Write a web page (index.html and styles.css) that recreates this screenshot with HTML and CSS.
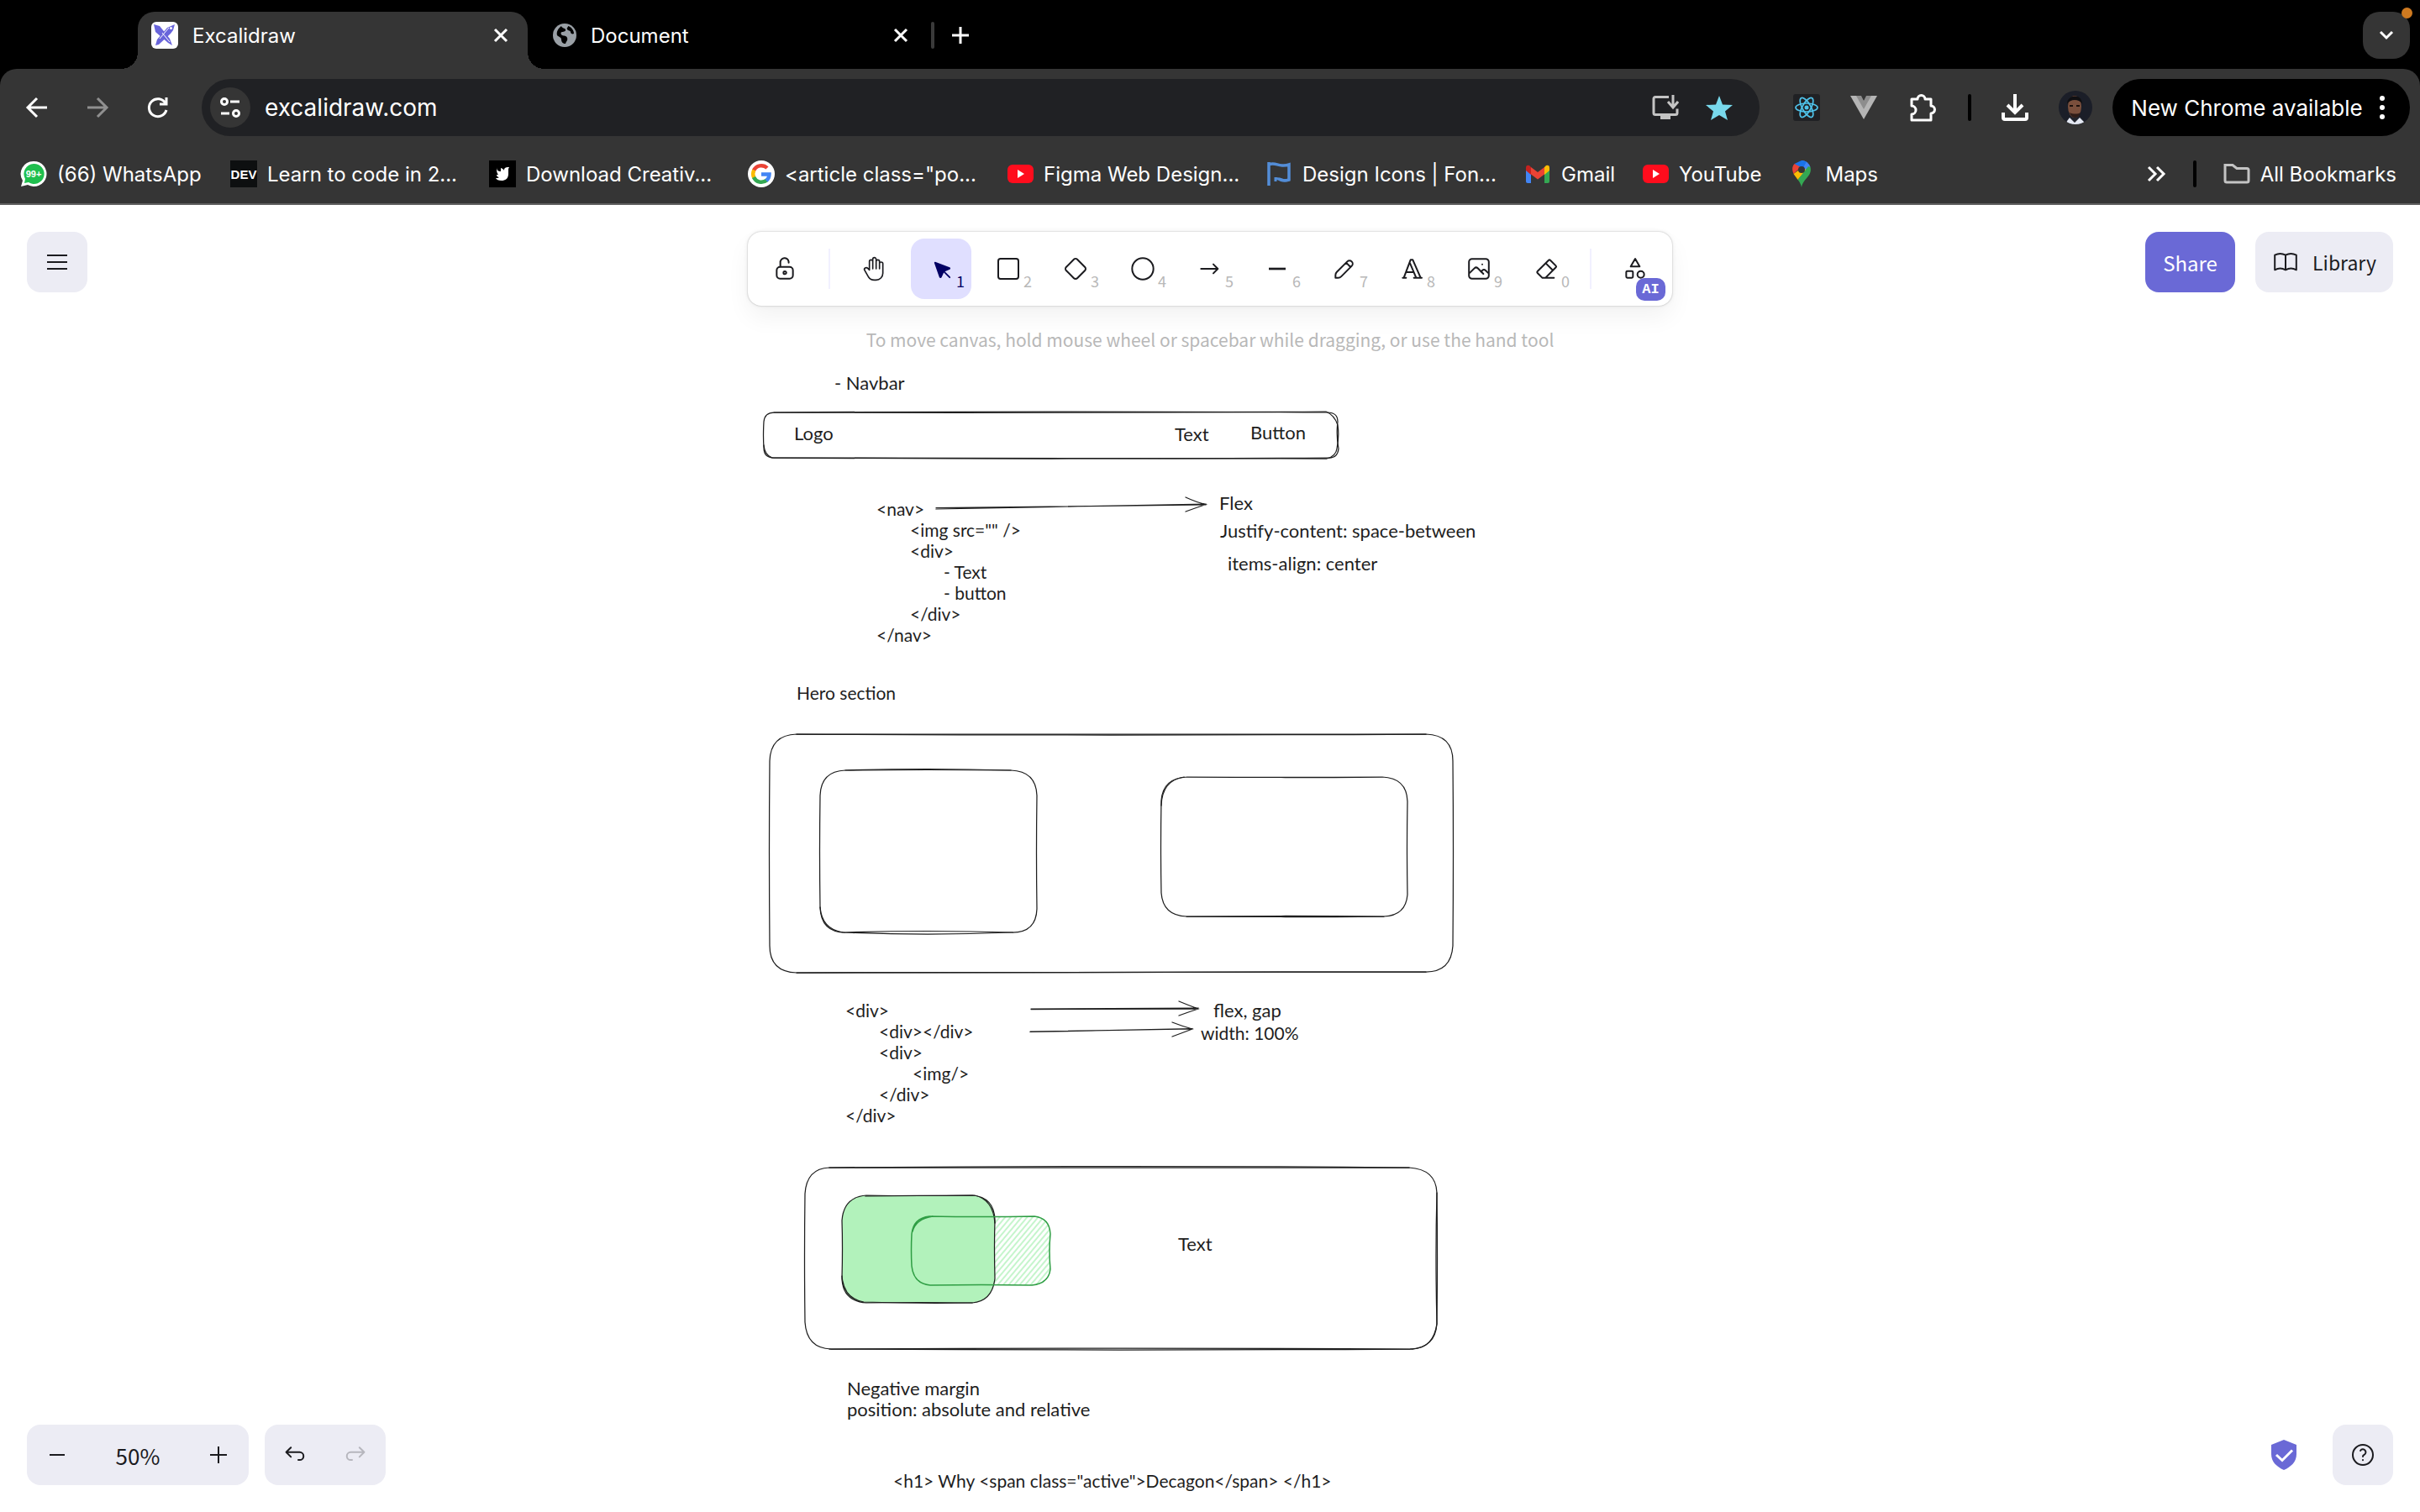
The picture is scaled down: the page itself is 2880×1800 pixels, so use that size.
FILE: index.html
```
<!DOCTYPE html>
<html lang="en">
<head>
<meta charset="utf-8">
<title>Excalidraw</title>
<link rel="stylesheet" href="styles.css">
</head>
<body>
<header class="browser">
  <div class="tabstrip">
    <div class="tab tab-active">
      <svg class="ico32" viewBox="0 0 32 32"><rect width="32" height="32" rx="6" fill="#fff"/><g fill="#6965db"><path d="M3 3l7 2 12 15 3 8-5-3L5 12z"/><path d="M28 3l-9 4L7 21l-2 7 4-1 14-13 3-4z"/></g><path d="M21 7l-11 13M13 13l9 11" stroke="#fff" stroke-width="1" fill="none"/><circle cx="23.500" cy="7.500" r="1.500" fill="#fff"/></svg>
      <span class="tab-title">Excalidraw</span>
      <button class="plain" aria-label="Close tab"><svg class="ico20" viewBox="0 0 20 20"><path d="M3 3l14 14M17 3L3 17" class="w3"/></svg></button>
    </div>
    <div class="tab">
      <svg class="ico28" viewBox="0 0 28 28"><circle cx="14" cy="14" r="14" fill="#9aa0a6"/><path d="M10 3c1 3 4 2 5 4s-2 3-4 3-2 3 0 4 5 0 6 3-1 4-2 7c-3 0-5-2-5-5s-3-3-5-5c-1-4 1-8 5-11zM18 3c4 1 7 5 7 9-2 1-4 0-4-2s-3-1-4-3 1-2 1-4z" fill="#000"/></svg>
      <span class="tab-title">Document</span>
      <button class="plain" aria-label="Close tab"><svg class="ico20" viewBox="0 0 20 20"><path d="M3 3l14 14M17 3L3 17" class="w3"/></svg></button>
    </div>
    <span class="tab-sep"></span>
    <button class="plain" aria-label="New tab"><svg class="ico20" viewBox="0 0 20 20"><path d="M10 0v20M0 10h20" class="w3"/></svg></button>
    <button class="tab-search" aria-label="Search tabs"><svg class="ico20" viewBox="0 0 20 20"><path d="M3 6l7 7 7-7" class="w3"/></svg><span class="dot"></span></button>
  </div>
  <div class="navrow">
    <div class="navbtns">
      <button class="plain" aria-label="Back"><svg class="ico28" viewBox="0 0 28 28"><path d="M26 14H3M14 3L3 14l11 11" class="w3"/></svg></button>
      <button class="plain dim" aria-label="Forward"><svg class="ico28" viewBox="0 0 28 28"><path d="M2 14h23M14 3l11 11-11 11" class="w3"/></svg></button>
      <button class="plain" aria-label="Reload"><svg class="ico28" viewBox="0 0 28 28"><path d="M24 17a10.500 10.500 0 1 1-1-8M24 2v8h-8" class="w3"/></svg></button>
    </div>
    <div class="omnibox">
      <button class="chip" aria-label="Site information"><svg class="ico28" viewBox="0 0 28 28"><circle cx="7" cy="7" r="3.500" class="w3"/><path d="M14 7h11M3 21h10" class="w3"/><circle cx="21" cy="21" r="3.500" class="w3"/></svg></button>
      <input class="url" type="text" value="excalidraw.com" aria-label="Address">
      <button class="plain" aria-label="Install app"><svg class="ico32" viewBox="0 0 32 32"><path d="M20 3.500H4a2 2 0 0 0-2 2v17a2 2 0 0 0 2 2h24a2 2 0 0 0 2-2v-5" fill="none" stroke="#c4c4c4" stroke-width="3"/><path d="M10 25h12v5H10z" fill="#c4c4c4"/><path d="M25 1v14M19 9l6 7 6-7" fill="none" stroke="#c4c4c4" stroke-width="3"/></svg></button>
      <button class="plain" aria-label="Bookmarked"><svg class="ico32" viewBox="0 0 32 32"><path d="M16 2l4 10.500L32 13l-9 7.500L26 31l-10-6-10 6 3-10.500L0 13l12-.5z" fill="#78d9ec"/></svg></button>
    </div>
    <div class="exts">
      <svg class="ico32" viewBox="0 0 32 32"><rect width="32" height="32" rx="3" fill="#202124"/><g fill="none" stroke="#4fc3ea" stroke-width="1.700"><ellipse cx="16" cy="16" rx="13" ry="5"/><ellipse cx="16" cy="16" rx="13" ry="5" transform="rotate(60 16 16)"/><ellipse cx="16" cy="16" rx="13" ry="5" transform="rotate(120 16 16)"/></g><circle cx="16" cy="16" r="2.500" fill="#4fc3ea"/></svg>
      <svg class="ico32" viewBox="0 0 32 32"><path d="M0 2h12l4 7 4-7h12L16 30z" fill="#b5b5b5"/><path d="M7 2h6l3 6 3-6h6l-9 16z" fill="#8d8d8d"/></svg>
      <button class="plain" aria-label="Extensions"><svg class="ico36" viewBox="0 0 36 36"><path d="M5 8h7a4.500 4.500 0 0 1 9 0h7v8a4.500 4.500 0 0 1 0 9v8H5v-7a5 5 0 0 0 0-10z" class="w3" stroke-linejoin="round"/></svg></button>
      <span class="vsep"></span>
      <button class="plain" aria-label="Downloads"><svg class="ico32" viewBox="0 0 32 32"><path d="M16 0v21M7 13l9 9 9-9M2 22v6a2 2 0 0 0 2 2h24a2 2 0 0 0 2-2v-6" class="w4"/></svg></button>
      <svg class="ico40" viewBox="0 0 40 40"><defs><clipPath id="av"><circle cx="20" cy="20" r="20"/></clipPath></defs><g clip-path="url(#av)"><rect width="40" height="40" fill="#1b1e28"/><path d="M3 40l8-6 6-4h7l6 5 3 5z" fill="#22242c"/><path d="M10 36l3-4 6 6 6-6 5 5 1 5H8z" fill="#e4e8f2"/><ellipse cx="19" cy="19" rx="8" ry="13" fill="#7a4f3c"/><path d="M10 16c0-12 18-13 18 0-3-6-14-7-18 0z" fill="#100f12"/><path d="M13 26c2 8 11 8 13 0-3 2-9 2-13 0z" fill="#2f1d18"/><path d="M13 18h4M21 18h4" stroke="#1c100c" stroke-width="2"/></g></svg>
    </div>
    <button class="update">New Chrome available<svg class="dots" viewBox="0 0 6 28"><g fill="#fff"><circle cx="3" cy="3" r="3"/><circle cx="3" cy="14" r="3"/><circle cx="3" cy="25" r="3"/></g></svg></button>
  </div>
  <nav class="bookmarks">
    <a href="#"><svg class="ico32" viewBox="0 0 32 32"><path d="M16 1a15 15 0 1 1-7 28L1 31l2-7A15 15 0 0 1 16 1z" fill="#fff"/><path d="M16 4a12 12 0 1 1-6 22l-5 1 1-5A12 12 0 0 1 16 4z" fill="#1fbf4e"/><text x="16" y="20" class="t99">99+</text></svg><span class="chat">(66) WhatsApp</span></a>
    <a href="#"><svg class="ico32" viewBox="0 0 32 32"><rect width="32" height="32" fill="#0d0f10"/><text x="16" y="22" class="tdev">DEV</text></svg><span class="cut">Learn to code in 2...</span></a>
    <a href="#"><svg class="ico32" viewBox="0 0 32 32"><rect width="32" height="32" fill="#000"/><path d="M9 8c0 4 2 5 5 5V9c2 1 3 1 4 3 0-3 1-4 6-4l-1 2v6c0 6-4 8-8 8s-6-1-7-3c2 0 3 0 4-1-2 0-3-2-3-3h2c-2-2-2-5-2-9z" fill="#fff"/></svg><span class="cut">Download Creativ...</span></a>
    <a href="#"><svg class="ico32" viewBox="0 0 32 32"><circle cx="16" cy="16" r="16" fill="#fff"/><g fill="none" stroke-width="4.500"><path d="M23 9a10 10 0 0 0-16 3" stroke="#ea4335"/><path d="M7.300 11.500a10 10 0 0 0 0 9" stroke="#fbbc05"/><path d="M7 20a10 10 0 0 0 15.500 3.500" stroke="#34a853"/><path d="M22 24a10 10 0 0 0 3.500-7.500H16" stroke="#4285f4"/></g></svg><span class="cut">&lt;article class="po...</span></a>
    <a href="#"><svg class="ico32" viewBox="0 0 32 32"><rect x="1" y="5" width="31" height="22" rx="6" fill="#ff0d1d"/><path d="M13 11l8 5-8 5z" fill="#fff"/></svg><span class="cut">Figma Web Design...</span></a>
    <a href="#"><svg class="ico32" viewBox="0 0 32 32"><path d="M4 2v28M4 5c8-4 12 4 24 0v18c-6 2-9 1-12-1" fill="none" stroke="#538dd7" stroke-width="3.500"/><path d="M12 20v5M12 22c6-2 8 4 16 1" fill="none" stroke="#538dd7" stroke-width="3"/></svg><span class="cut">Design Icons | Fon...</span></a>
    <a href="#"><svg class="ico32" viewBox="0 0 32 32"><path d="M2 9v16q0 2 2 2h4V13z" fill="#4285f4"/><path d="M30 9v16q0 2-2 2h-4V13z" fill="#34a853"/><path d="M24 8l2-2q4-1 4 3v3l-6 5z" fill="#fbbc04"/><path d="M8 8L6 6q-4-1-4 3v3l6 5z" fill="#c5221f"/><path d="M8 8l8 6 8-6v8.500l-8 6-8-6z" fill="#ea4335"/></svg><span>Gmail</span></a>
    <a href="#"><svg class="ico32" viewBox="0 0 32 32"><rect x="1" y="5" width="31" height="22" rx="6" fill="#ff0d1d"/><path d="M13 11l8 5-8 5z" fill="#fff"/></svg><span>YouTube</span></a>
    <a href="#"><svg class="ico32" viewBox="0 0 32 32"><path d="M16 0a11 11 0 0 1 10.500 8L16 14z" fill="#4285f4"/><path d="M16 0L7.500 4 16 12 22 1.500z" fill="#1a73e8"/><path d="M7.500 4C4 8 5 12 6.500 16L15 8z" fill="#ea4335"/><path d="M6.500 16l5 7L22 11l-6-2z" fill="#fbbc04"/><path d="M26.500 8C29 19 18 21 16 32c-1-4-2-6-4.500-9L24 7z" fill="#34a853"/><circle cx="16" cy="11" r="4" fill="#353535"/></svg><span>Maps</span></a>
    <button class="plain more" aria-label="More bookmarks"><svg class="ico24" viewBox="0 0 24 24"><path d="M3 4l8 8-8 8M13 4l8 8-8 8" class="w3"/></svg></button>
    <span class="vsep"></span>
    <a href="#"><svg class="ico32" viewBox="0 0 32 32"><path d="M2 5.500h9l5 4h12a2 2 0 0 1 2 2V24a2 2 0 0 1-2 2H4a2 2 0 0 1-2-2z" fill="none" stroke="#c4c4c4" stroke-width="3"/></svg><span class="all">All Bookmarks</span></a>
  </nav>
</header>

<main class="stage">
  <div class="drawing">
    <svg class="shapes" aria-hidden="true">
      <defs><pattern id="hatch" width="5" height="5" patternUnits="userSpaceOnUse" patternTransform="rotate(40)"><path d="M1 0v5" stroke="#b2f2bb" stroke-width="1.500"/></pattern></defs>
      <g class="ink">
        <path d="M921 247Q1250 245 1580 247Q1592 247 1592 258Q1590 275 1593 290Q1592 301 1582 301Q1250 303 921 301Q909 301 909 289Q908 275 909 258Q910 247 921 247z"/>
        <path d="M921 247Q1250 248 1578 246Q1588 250 1592 262Q1594 275 1591 290Q1590 299 1579 302Q1250 301 919 301Q910 298 909 286"/>
        <path d="M948 630Q1320 632 1697 630Q1729 631 1729 662Q1730 770 1729 882Q1727 913 1697 913Q1320 912 948 914Q916 913 916 882Q915 770 916 662Q917 631 948 630z"/>
        <path d="M948 630Q1320 629 1697 630M948 914Q1320 915 1697 913"/>
        <path d="M1006 673Q1104 672 1203 673Q1233 674 1234 703Q1233 770 1234 838Q1233 866 1205 866Q1104 863 1006 866Q977 866 976 836Q975 770 976 703Q977 674 1006 673z"/>
        <path d="M1006 673Q1104 670 1203 673M1205 866Q1104 870 1003 866Q978 862 976 836"/>
        <path d="M1413 681Q1530 682 1645 681Q1674 682 1675 710Q1674 765 1675 821Q1673 846 1647 847Q1530 848 1412 847Q1384 846 1382 819Q1381 765 1382 709Q1384 682 1413 681z"/>
        <path d="M1382 715Q1383 685 1409 681M1412 847Q1530 846 1647 847"/>
        <path d="M987 1146Q1330 1143 1677 1146Q1709 1148 1710 1176Q1711 1250 1710 1332Q1708 1361 1678 1362Q1330 1364 989 1362Q960 1361 958 1330Q957 1250 958 1177Q960 1147 987 1146z"/>
        <path d="M987 1146Q1330 1147 1677 1146M1710 1176Q1708 1250 1710 1332Q1706 1360 1682 1362Q1330 1360 987 1362"/>
        <path d="M1114 360.500L1435 357M1114 362L1435 356M1411 348Q1424 354 1435 356.500Q1422 361 1411 365"/>
        <path d="M1227 957L1426 956M1227 957.500L1426 957M1403 948Q1415 953 1426 957Q1414 961 1403 965"/>
        <path d="M1226 984L1419 981M1226 984.500L1419 980.500M1395 973Q1408 978 1419 981Q1406 986 1395 990"/>
      </g>
      <rect x="1085" y="1204" width="165" height="82" rx="20" fill="url(#hatch)"/>
      <path class="ink filled" d="M1031 1179Q1093 1180 1157 1179Q1183 1181 1184 1208Q1183 1240 1184 1278Q1181 1305 1157 1307Q1093 1306 1031 1307Q1003 1305 1002 1278Q1003 1240 1002 1209Q1004 1181 1031 1179z"/>
      <path class="ink" d="M1030 1180Q1093 1179 1160 1179Q1182 1184 1184 1212M1157 1307Q1093 1308 1028 1306Q1004 1302 1002 1275"/>
      <path class="ink green" d="M1106 1204Q1168 1205 1231 1204Q1249 1206 1250 1225Q1248 1245 1250 1267Q1248 1284 1228 1286Q1168 1285 1107 1286Q1087 1284 1085 1263Q1084 1245 1085 1225Q1087 1206 1106 1204zM1086 1222Q1090 1207 1110 1204"/>
    </svg>
    <p class="note n1">- Navbar</p>
    <p class="note n2">Logo</p>
    <p class="note n3">Text</p>
    <p class="note n4">Button</p>
    <div class="note code n5"><p>&lt;nav&gt;</p><p class="in1">&lt;img src="" /&gt;</p><p class="in1">&lt;div&gt;</p><p class="in2">- Text</p><p class="in2">- button</p><p class="in1">&lt;/div&gt;</p><p>&lt;/nav&gt;</p></div>
    <p class="note n6">Flex</p>
    <p class="note n7">Justify-content: space-between</p>
    <p class="note n8">items-align: center</p>
    <p class="note code n9">Hero section</p>
    <div class="note code n10"><p>&lt;div&gt;</p><p class="in1">&lt;div&gt;&lt;/div&gt;</p><p class="in1">&lt;div&gt;</p><p class="in2">&lt;img/&gt;</p><p class="in1">&lt;/div&gt;</p><p>&lt;/div&gt;</p></div>
    <p class="note n11">flex, gap</p>
    <p class="note code n12">width: 100%</p>
    <p class="note n13">Text</p>
    <div class="note n14"><p>Negative margin</p><p>position: absolute and relative</p></div>
    <p class="note code n15">&lt;h1&gt; Why &lt;span class="active"&gt;Decagon&lt;/span&gt; &lt;/h1&gt;</p>
  </div>

  <div class="top">
    <div class="side"><button class="tile" aria-label="Menu"><svg class="ico40" viewBox="0 0 40 40"><path d="M8 12h24M8 20h24M8 28h24" class="k"/></svg></button></div>
    <div class="center">
      <div class="tools">
        <button class="tool" aria-label="Keep selected tool active"><svg class="ico32" viewBox="0 0 20 20"><g class="k1"><path d="M13.542 8.542H6.458a2.500 2.500 0 0 0-2.500 2.500v3.750a2.500 2.500 0 0 0 2.500 2.500h7.084a2.500 2.500 0 0 0 2.500-2.500v-3.750a2.500 2.500 0 0 0-2.500-2.500z"/><path d="M10 13.958a1.042 1.042 0 1 0 0-2.083 1.042 1.042 0 0 0 0 2.083z"/><path d="M6.667 8.333V5.417a3.100 3.100 0 0 1 6.200-.6v.6"/></g></svg></button>
        <span class="tsep"></span>
        <button class="tool" aria-label="Hand"><svg class="ico32" viewBox="0 0 24 24"><g class="k1"><path d="M8 13v-7.500a1.500 1.500 0 0 1 3 0v6.500M11 5.500v-2a1.500 1.500 0 1 1 3 0v8.500M14 5.500a1.500 1.500 0 0 1 3 0v6.500M17 7.500a1.500 1.500 0 0 1 3 0v8.500a6 6 0 0 1-6 6h-2h.208a6 6 0 0 1-5.012-2.700l-.196-.300c-.312-.479-1.407-2.388-3.286-5.728a1.500 1.500 0 0 1 .536-2.022a1.867 1.867 0 0 1 2.280.280l1.470 1.470"/></g></svg></button>
        <button class="tool on" aria-label="Selection"><svg class="ico32" viewBox="0 0 22 22"><path d="M6 6l4.153 11.793a.365.365 0 0 0 .331.207.366.366 0 0 0 .332-.207L13 13l4.787-1.994a.355.355 0 0 0 .213-.323.355.355 0 0 0-.213-.323L6 6zM13.500 13.500L18 18" fill="#030064" stroke="#030064" stroke-width="1.250" stroke-linejoin="round" stroke-linecap="round"/></svg><kbd>1</kbd></button>
        <button class="tool" aria-label="Rectangle"><svg class="ico32" viewBox="0 0 24 24"><rect x="3" y="3" width="18" height="18" rx="2" class="k15"/></svg><kbd>2</kbd></button>
        <button class="tool" aria-label="Diamond"><svg class="ico32" viewBox="0 0 24 24"><path d="M10.500 20.400l-6.900-6.900c-.781-.781-.781-2.219 0-3l6.900-6.900c.781-.781 2.219-.781 3 0l6.900 6.900c.781.781.781 2.219 0 3l-6.900 6.900c-.781.781-2.219.781-3 0z" class="k15"/></svg><kbd>3</kbd></button>
        <button class="tool" aria-label="Ellipse"><svg class="ico32" viewBox="0 0 24 24"><circle cx="12" cy="12" r="9.500" class="k15"/></svg><kbd>4</kbd></button>
        <button class="tool" aria-label="Arrow"><svg class="ico32" viewBox="0 0 24 24"><path d="M4 12h15M15 16l4-4M15 8l4 4" class="k15"/></svg><kbd>5</kbd></button>
        <button class="tool" aria-label="Line"><svg class="ico32" viewBox="0 0 24 24"><path d="M4.500 12h15" class="k2"/></svg><kbd>6</kbd></button>
        <button class="tool" aria-label="Draw"><svg class="ico32" viewBox="0 0 20 20"><g class="k1"><path d="M7.643 15.690l7.774-7.773a2.357 2.357 0 1 0-3.334-3.334L4.310 12.357a3.333 3.333 0 0 0-.977 2.357v1.953h1.953c.884 0 1.732-.352 2.357-.977zM11.250 5.417l3.333 3.333"/></g></svg><kbd>7</kbd></button>
        <button class="tool" aria-label="Text"><svg class="ico32" viewBox="0 0 24 24"><path d="M4 20h3M14 20h7M6.900 15h6.900M10.200 6.300L16 20M5 20l6-16h2l7 16" class="k15"/></svg><kbd>8</kbd></button>
        <button class="tool" aria-label="Insert image"><svg class="ico32" viewBox="0 0 20 20"><g class="k1"><path d="M12.500 6.667h.010"/><path d="M4.910 2.625h10.180a2.284 2.284 0 0 1 2.285 2.284v10.182a2.284 2.284 0 0 1-2.284 2.284H4.909a2.284 2.284 0 0 1-2.284-2.284V4.909a2.284 2.284 0 0 1 2.284-2.284z"/><path d="M3.333 12.917l3.334-3.334c.773-.744 1.726-.744 2.500 0l4.166 4.167"/><path d="M11.667 12.083l.833-.833c.774-.744 1.726-.744 2.500 0l1.667 1.667"/></g></svg><kbd>9</kbd></button>
        <button class="tool" aria-label="Eraser"><svg class="ico32" viewBox="0 0 24 24"><path d="M19 20h-10.500l-4.210-4.300a1 1 0 0 1 0-1.410l10-10a1 1 0 0 1 1.410 0l5 5a1 1 0 0 1 0 1.410l-9.200 9.300M18 13.300l-6.300-6.300" class="k15"/></svg><kbd>0</kbd></button>
        <span class="tsep"></span>
        <button class="tool" aria-label="More tools"><svg class="ico32" viewBox="0 0 24 24"><path d="M12 3l-4 7h8zM17 17m-3 0a3 3 0 1 0 6 0a3 3 0 1 0-6 0M5 14h4a1 1 0 0 1 1 1v4a1 1 0 0 1-1 1H5a1 1 0 0 1-1-1v-4a1 1 0 0 1 1-1z" class="k15"/></svg><span class="ai">AI</span></button>
      </div>
      <p class="hint">To move canvas, hold mouse wheel or spacebar while dragging, or use the hand tool</p>
    </div>
    <div class="side right">
      <button class="share">Share</button>
      <button class="library"><svg class="ico32" viewBox="0 0 20 20"><path d="M2 15.800c2.500-1.300 5.500-1.300 8 0 2.500-1.300 5.500-1.300 8 0V4.800c-2.500-1.300-5.500-1.300-8 0-2.500-1.300-5.500-1.300-8 0zM10 4.800v11" class="k1"/></svg>Library</button>
    </div>
  </div>

  <footer class="bottom">
    <div class="group">
      <button class="gbtn" aria-label="Zoom out"><svg class="ico20" viewBox="0 0 20 20"><path d="M1 10h18" class="k"/></svg></button>
      <button class="gbtn zoom">50%</button>
      <button class="gbtn" aria-label="Zoom in"><svg class="ico20" viewBox="0 0 20 20"><path d="M0 10h20M10 0v20" class="k"/></svg></button>
    </div>
    <div class="group">
      <button class="gbtn" aria-label="Undo"><svg class="ico32" viewBox="0 0 20 20"><path d="M7 11.500L3.500 8 7 4.500M4 8h9.500a2.900 2.900 0 0 1 0 5.800h-1" class="k1"/></svg></button>
      <button class="gbtn faded" aria-label="Redo"><svg class="ico32" viewBox="0 0 20 20"><path d="M13 11.500L16.500 8 13 4.500M16 8H6.500a2.900 2.900 0 0 0 0 5.800h1" class="k1"/></svg></button>
    </div>
    <a class="shield" href="#" aria-label="Encrypted"><svg viewBox="0 0 30 36"><path d="M15 0L0 6v11c0 9 6 15 15 19 9-4 15-10 15-19V6z" fill="#6a69d6"/><path d="M6 18l7 6.500L25 12.500" fill="none" stroke="#fff" stroke-width="3"/></svg></a>
    <button class="tile" aria-label="Help"><svg class="ico32" viewBox="0 0 24 24"><circle cx="12" cy="12" r="9" class="k15"/><path d="M12 16.500v.200M12 13.500a1.500 1.500 0 0 1 1-1.500 2.600 2.600 0 1 0-3.200-3.800" class="k15"/></svg></button>
  </footer>
</main>
</body>
</html>
```
FILE: styles.css
```
* { box-sizing: border-box; margin: 0; padding: 0; }
html, body { height: 100%; }
body { display: flex; flex-direction: column; overflow: hidden; background: #000; font-family: Inter, sans-serif; color: #fff; }
button { font: inherit; color: inherit; background: none; border: 0; display: flex; align-items: center; justify-content: center; }
a { color: inherit; text-decoration: none; }
svg { display: block; flex: none; }
.ico20 { width: 20px; height: 20px; }
.ico24 { width: 24px; height: 24px; }
.ico28 { width: 28px; height: 28px; }
.ico32 { width: 32px; height: 32px; }
.ico36 { width: 36px; height: 36px; }
.ico40 { width: 40px; height: 40px; }
.w3, .w4 { fill: none; stroke: #fff; stroke-width: 3; }
.w4 { stroke-width: 4; }
.k, .k1, .k15, .k2 { fill: none; stroke: #1b1b1f; stroke-width: 2; }
.k1 { stroke-width: 1.25; stroke-linecap: round; stroke-linejoin: round; }
.k15 { stroke-width: 1.5; stroke-linecap: round; stroke-linejoin: round; }

/* tab strip */
.tabstrip { display: flex; height: 82px; padding: 14px 12px 12px 164px; align-items: center; }
.tab { display: flex; align-items: center; width: 464px; height: 56px; padding: 0 22px 0 16px; font-size: 24px; gap: 17px; }
.tab-title { flex: 1; }
.tab-active { position: relative; align-self: flex-start; height: 68px; padding-bottom: 12px; background: #353535; border-radius: 20px 20px 0 0; }
.tab-active::before, .tab-active::after { content: ""; position: absolute; bottom: 0; width: 20px; height: 20px; }
.tab-active::before { left: -20px; background: radial-gradient(circle at 0 0, #000 20px, #353535 20px); }
.tab-active::after { right: -20px; background: radial-gradient(circle at 100% 0, #000 20px, #353535 20px); }
.tab + .tab { width: 480px; padding: 0 26px 0 30px; }
.tab-sep { width: 4px; height: 32px; border-radius: 2px; background: #3a3a3a; margin-right: 21px; }
.tab-search { position: relative; width: 56px; height: 56px; margin-left: auto; border-radius: 20px; background: #353535; }
.dot { position: absolute; top: -5px; right: -3px; width: 13px; height: 13px; border-radius: 50%; background: #cf7a20; }

/* address row */
.navrow { display: flex; align-items: center; height: 92px; padding: 0 12px 0 30px; background: #353535; border-radius: 20px 20px 0 0; }
.navbtns { display: flex; gap: 44px; width: 210px; }
.dim { opacity: .45; }
.omnibox { flex: 1; display: flex; align-items: center; height: 68px; padding: 0 32px 0 10px; border-radius: 34px; background: #202124; gap: 32px; }
.chip { width: 48px; height: 48px; border-radius: 50%; background: #353535; }
.url { flex: 1; margin-left: -15px; border: 0; outline: 0; background: none; color: #fff; font: 28px Inter, sans-serif; }
.exts { display: flex; align-items: center; gap: 36px; padding: 0 24px 0 40px; }
.vsep { width: 4px; height: 32px; border-radius: 2px; background: #000; }
.update { height: 68px; width: 354px; border-radius: 34px; background: #000; font-size: 26px; gap: 20px; padding-right: 8px; }
.dots { width: 6px; height: 28px; }

/* bookmarks */
.bookmarks { display: flex; align-items: center; height: 70px; padding: 0 28px 2px 24px; gap: 32px; background: #353535; border-bottom: 2px solid #606060; font-size: 24px; white-space: nowrap; }
.bookmarks a { display: flex; align-items: center; gap: 12px; }
.cut { width: 232px; }
.chat { width: 174px; }
.more { margin-left: auto; }
.t99 { font: 700 11px "Liberation Sans", sans-serif; fill: #fff; text-anchor: middle; }
.tdev { font: 700 15px "Liberation Sans", sans-serif; fill: #fff; text-anchor: middle; }

/* canvas */
.stage { flex: 1; position: relative; display: flex; flex-direction: column; justify-content: space-between; overflow: hidden; background: #fff; color: #1b1b1f; font-family: "Noto Sans CJK SC", sans-serif; padding: 32px; }
.drawing, .shapes { position: absolute; inset: 0; width: 100%; height: 100%; }
.ink { fill: none; stroke: #1e1e1e; stroke-width: 1.25; stroke-linecap: round; }
.filled { fill: #b2f2bb; }
.green { stroke: #2f9e44; stroke-width: 1.5; }
.note { position: absolute; font: 22px/25px Lato, sans-serif; color: #1e1e1e; white-space: nowrap; }
.code { font-size: 21px; }
.in1 { padding-left: 40px; }
.in2 { padding-left: 80px; }
.n1 { left: 993px; top: 199px; }
.n2 { left: 945px; top: 259px; }
.n3 { left: 1398px; top: 260px; }
.n4 { left: 1488px; top: 258px; }
.n5 { left: 1043px; top: 349px; }
.n6 { left: 1451px; top: 342px; }
.n7 { left: 1452px; top: 375px; }
.n8 { left: 1461px; top: 414px; }
.n9 { left: 948px; top: 568px; }
.n10 { left: 1006px; top: 946px; }
.n11 { left: 1444px; top: 946px; }
.n12 { left: 1429px; top: 973px; }
.n13 { left: 1402px; top: 1224px; }
.n14 { left: 1008px; top: 1396px; }
.n15 { left: 1063px; top: 1506px; }

/* canvas controls */
.top { position: relative; display: flex; justify-content: space-between; align-items: flex-start; }
.side { flex: 1; display: flex; }
.right { justify-content: flex-end; gap: 24px; }
.center { display: flex; flex-direction: column; align-items: center; }
.tools { display: flex; gap: 8px; padding: 8px; border-radius: 16px; background: #fff; align-items: center; box-shadow: 0 0 2px rgba(0,0,0,.3), 0 0 6px rgba(0,0,0,.06), 0 14px 28px rgba(0,0,0,.05); }
.tool { position: relative; width: 72px; height: 72px; border-radius: 16px; }
.on { background: #e0dfff; color: #030064; }
.tsep { width: 2px; height: 48px; margin: 0 8px; background: #f1f0ff; }
kbd { position: absolute; right: 8px; bottom: 10px; font: 18px/24px "Noto Sans CJK SC", sans-serif; color: #b8b8b8; }
.on kbd { color: #030064; }
.ai { position: absolute; right: 0; bottom: -2px; width: 35px; height: 27px; border-radius: 10px; background: #6a69d6; color: #fff; font: 700 17px/27px "Liberation Mono", monospace; text-align: center; }
.hint { margin-top: 24px; font-size: 21px; line-height: 32px; color: #b8b8b8; white-space: nowrap; }
.tile { width: 72px; height: 72px; border-radius: 16px; background: #ececf4; }
.share { height: 72px; width: 107px; border-radius: 16px; background: #6a69d6; color: #fff; font-size: 24px; }
.library { height: 72px; width: 164px; border-radius: 16px; background: #ececf4; font-size: 23px; gap: 16px; }
.bottom { position: relative; display: flex; gap: 19px; align-items: center; }
.group { display: flex; border-radius: 16px; background: #ececf4; }
.gbtn { width: 72px; height: 72px; }
.zoom { width: 120px; font-size: 26px; }
.faded { opacity: .25; }
.shield { margin-left: auto; margin-right: 24px; }
.shield svg { width: 30px; height: 36px; }
```
